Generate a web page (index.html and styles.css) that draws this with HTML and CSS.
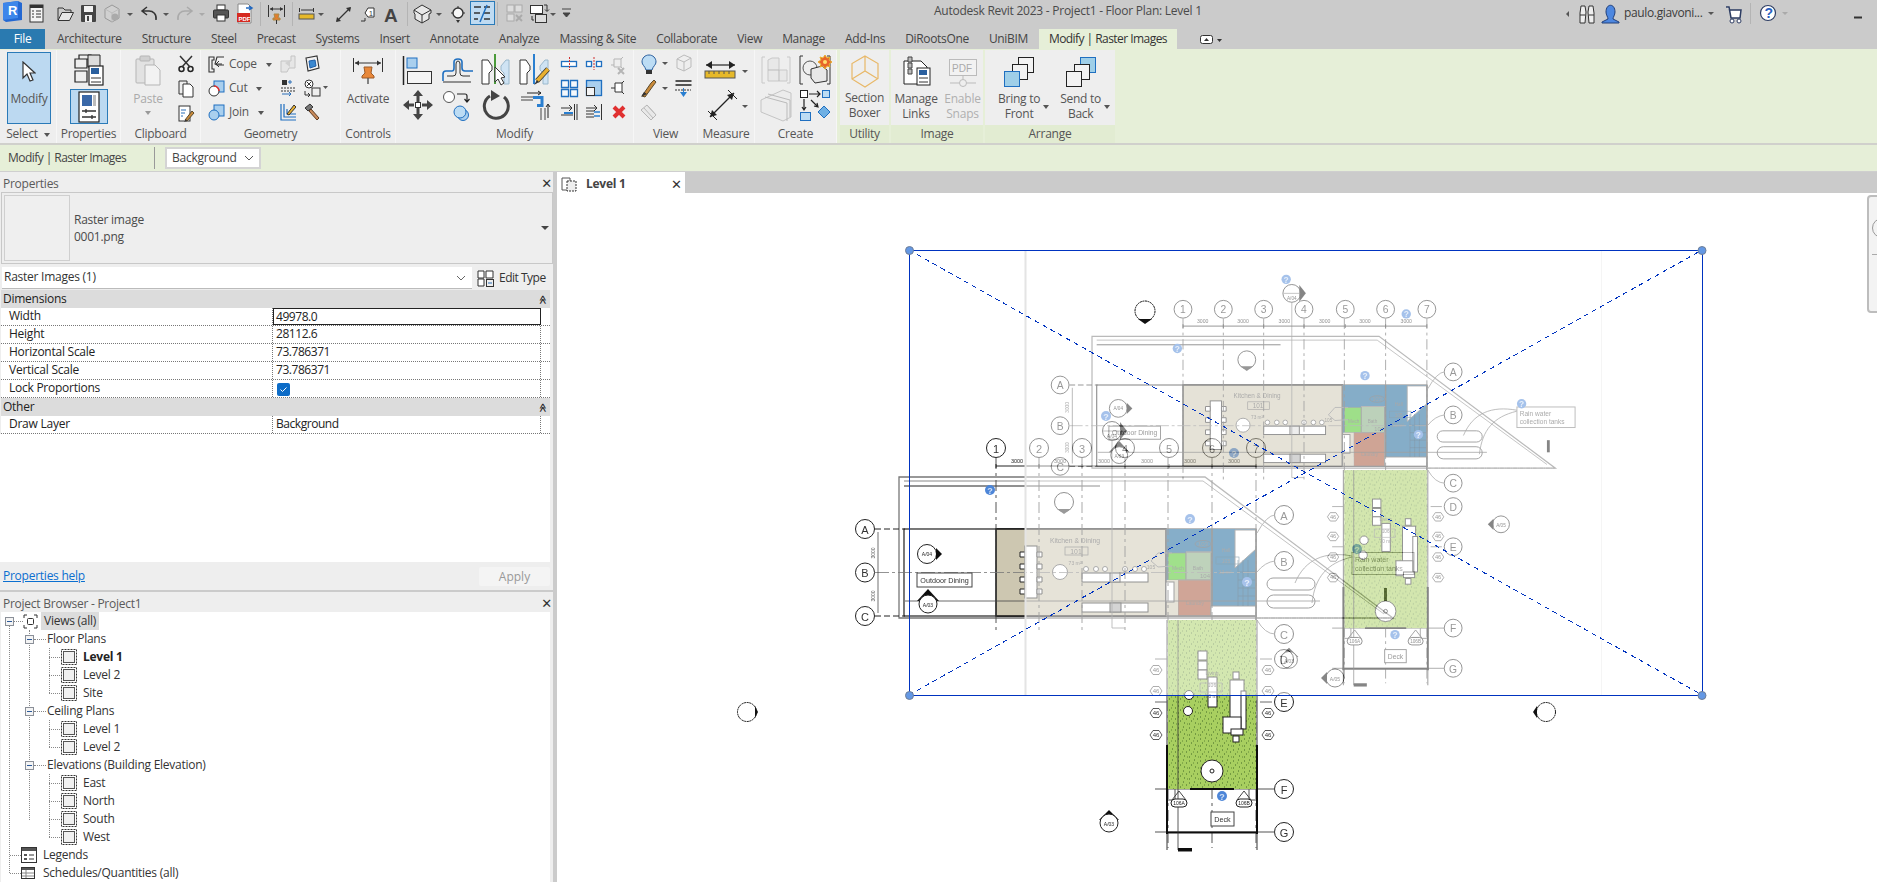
FILE: index.html
```html
<!DOCTYPE html>
<html lang="en">
<head>
<meta charset="utf-8">
<title>Autodesk Revit 2023 - Project1 - Floor Plan: Level 1</title>
<link rel="stylesheet" href="styles.css">
</head>
<body>
<svg class="defs" width="0" height="0" aria-hidden="true">
  <defs>
    <symbol id="viewico" viewBox="0 0 16 16">
      <rect x=".5" y=".5" width="15" height="15" fill="none" stroke="#333" stroke-dasharray="2 1"/>
      <rect x="2.5" y="2.5" width="11" height="11" fill="#f0f0f0" stroke="#555"/>
    </symbol>
    <symbol id="minus" viewBox="0 0 9 9">
      <rect x=".5" y=".5" width="8" height="8" fill="#f4f4f4" stroke="#8a8f98"/>
      <path d="M2 4.5h5" stroke="#2c5a9a"/>
    </symbol>
  </defs>
</svg>

<header class="titlebar">
  <svg class="qat" width="590" height="29" viewBox="0 0 590 29">
    <path d="M3 3 18 1l4 2v17l-16 2-3-2z" fill="#2468d2"/><path d="M3 3 18 1v17L3 20z" fill="#3d86ea"/>
    <text x="8" y="15" class="logo-r">R</text>
    <rect x="30" y="5" width="13" height="17" fill="#f4f4f4" stroke="#333"/><rect x="30" y="5" width="13" height="3" fill="#333"/><path d="M32 11h2M36 11h5M32 14h2M36 14h5M32 17h2M36 17h5" class="k"/>
    <path d="M58 20V8h5l2 2h6v3" class="k" /><path d="M58 20.500l4-8h11.500l-4 8z" fill="#e6e6e6" stroke="#333"/>
    <rect x="81" y="5" width="15" height="17" rx="1" fill="#444"/><rect x="84" y="6" width="9" height="6" fill="#f2f2f2"/><rect x="85" y="15" width="7" height="7" fill="#eee"/><rect x="87" y="16" width="2" height="5" fill="#444"/>
    <path d="m112 5 7 4v9l-7 4-7-4V9z" fill="#d0d0d0" stroke="#999"/><path d="m105 9 7 4 7-4M112 13v9" class="g"/><circle cx="115" cy="17" r="3.500" fill="#aaa"/>
    <path d="M127 13h6l-3 3z" class="car"/>
    <path d="M156 20c1-6-3-9-7-9h-7m5-4-5 4 5 4" fill="none" stroke="#333" stroke-width="1.500"/>
    <path d="M163 13h6l-3 3z" class="car"/>
    <path d="M178 20c-1-6 3-9 7-9h7m-5-4 5 4-5 4" fill="none" stroke="#aaa" stroke-width="1.500"/>
    <path d="M199 13h6l-3 3z" class="car-g"/>
    <rect x="217" y="5" width="8" height="5" fill="#fff" stroke="#333"/><rect x="213.500" y="10" width="15" height="8" rx="1" fill="#555" stroke="#333"/><rect x="217" y="15" width="8" height="6" fill="#fff" stroke="#333"/>
    <path d="M238 4h10l3 3v16h-13z" fill="#fff" stroke="#888"/><rect x="237" y="13" width="13" height="9" fill="#d62a20"/><text x="238.500" y="21" class="mini-pdf">PDF</text><path d="M246 8h5m-2-2 3 2-3 2" fill="none" stroke="#2268c0" stroke-width="1.500"/>
    <path d="M260.500 2v24M292.500 2v24M407.500 2v24M497.500 2v24" stroke="#b4b4b4"/>
    <path d="M268.500 5v12M284.500 5v12M270 9h13" class="k"/><path d="m270 9 3-2v4zM283 9l-3-2v4z" fill="#333"/><path d="M274 14h5l-1 4h2v2h-7v-2h2z" fill="#e47d2c" stroke="#a84"/><path d="M276.500 20v4" class="k"/>
    <rect x="299" y="14" width="15" height="5" fill="#e6b92a" stroke="#555"/><path d="M299.500 8v4M313.500 8v4M301 10h12" class="k"/><path d="M318 13h6l-3 3z" class="car"/>
    <path d="m337 21 13-13" stroke="#333" stroke-width="1.200"/><path d="m336 22 1-5 4 4zM351 7l-1 5-4-4z" fill="#333"/>
    <path d="M361 21h4v-3" class="k"/><path d="m365 13 3-5h6v9h-6z" fill="#fff" stroke="#333"/><text x="369" y="16" class="mini">1</text>
    <text x="384" y="22" class="big-a">A</text>
    <path d="m422 5 9 5v3l-2 1v5l-7 4-7-4v-5l-1-1v-3z" fill="#e8e8e8" stroke="#333"/><path d="m414 10 8 5 9-5M422 15v8" class="k"/>
    <path d="M436 13h6l-3 3z" class="car"/>
    <circle cx="458" cy="13" r="5" fill="#f6f6f6" stroke="#333" stroke-width="1.400"/><path d="M451 13h2M463 13h2M458 6v2" class="k"/><path d="m456 20 2 3 2-3z" fill="#333"/>
    <rect x="470.500" y="1.500" width="24" height="23" fill="#bfdbf2" stroke="#2a7ab8"/><path d="M474 7h7M474 13h6M474 19h4M484 7h6M484 13h6M484 19h6" stroke="#333" stroke-width="1.500"/><path d="m480 22 7-17" stroke="#1f6fc0" stroke-width="1.500"/>
    <rect x="507" y="5" width="7" height="7" fill="#ddd" stroke="#aaa"/><rect x="515" y="5" width="7" height="7" fill="#ddd" stroke="#aaa"/><rect x="507" y="14" width="7" height="7" fill="#ddd" stroke="#aaa"/><path d="m516 15 6 6m0-6-6 6" stroke="#aaa" stroke-width="1.800"/>
    <rect x="530.500" y="5.500" width="12" height="8" fill="#fff" stroke="#333"/><rect x="535.500" y="14.500" width="11" height="8" fill="#ddd" stroke="#333"/><path d="M544 5h3v6m-2-1.500 2 2 2-2M532 16v4h2" fill="none" stroke="#333"/>
    <path d="M550 13h6l-3 3z" class="car"/>
    <path d="M562 9h9M563 13h7l-3.500 4z" stroke="#444" fill="#444"/>
  </svg>
  <div class="doc-title">Autodesk Revit 2023 - Project1 - Floor Plan: Level 1</div>
  <svg class="infocenter" width="317" height="29" viewBox="1560 0 317 29">
    <path d="M1569 11v6l-3-3z" class="car"/>
    <path d="M1581 9h4v3h-4zM1589 9h4v3h-4z" fill="#fff" stroke="#333"/><path d="M1581 6h4l1 6 -1 11h-5v-10zM1589 6h4l1 7v10h-5l-1-11z" fill="#eee" stroke="#333"/><path d="M1580 15h5M1589 15h5" class="k"/>
    <path d="M1606 12c0-9 9-9 9 0 0 3-2 5-2 7l6 3v1h-17v-1l6-3c0-2-2-4-2-7z" fill="#4d87e0" stroke="#22407a"/>
    <text x="1624" y="17" class="who">paulo.giavoni...</text>
    <path d="M1708 12h6l-3 3z" class="car"/>
    <path d="M1726 7h3l2 11h9l1-8h-11" fill="#fff" stroke="#2d3d63" stroke-width="1.500"/><circle cx="1732" cy="21" r="2" fill="#fff" stroke="#2d3d63"/><circle cx="1739" cy="21" r="2" fill="#fff" stroke="#2d3d63"/>
    <path d="M1750.500 3v21" stroke="#b4b4b4"/>
    <circle cx="1768" cy="13" r="7.500" fill="#fff" stroke="#2d3d63" stroke-width="1.200"/><text x="1764.500" y="18" class="help">?</text>
    <path d="M1782 12h6l-3 3z" class="car-g"/>
    <path d="M1854 17.500h8" stroke="#333" stroke-width="2"/>
  </svg>
</header>

<nav class="tabs">
  <span class="tab file">File</span>
  <span class="tab first">Architecture</span><span class="tab">Structure</span><span class="tab">Steel</span><span class="tab">Precast</span><span class="tab">Systems</span><span class="tab">Insert</span><span class="tab">Annotate</span><span class="tab">Analyze</span><span class="tab">Massing &amp; Site</span><span class="tab">Collaborate</span><span class="tab">View</span><span class="tab">Manage</span><span class="tab">Add-Ins</span><span class="tab">DiRootsOne</span><span class="tab">UniBIM</span>
  <span class="tab context">Modify | Raster Images</span>
  <svg class="tab-toggle" width="26" height="20" viewBox="0 0 26 20">
    <rect x="1.500" y="6.500" width="12" height="8" rx="2" fill="#fff" stroke="#333"/><path d="M5 12h5L7.500 9z" fill="#333"/><path d="M18 10h5l-2.500 3z" fill="#333"/>
  </svg>
</nav>

<section class="ribbon">
  <div class="panel w-select">
    <div class="body">
      <button class="tool-on modify-btn">
        <svg width="14" height="22" viewBox="0 0 14 22"><path d="M1 1v16l4-4 3 7 3-1-3-7h5z" fill="#fff" stroke="#333" stroke-width="1.200"/></svg>
        <span>Modify</span>
      </button>
    </div>
    <div class="label">Select <i class="caret"></i></div>
  </div>

  <div class="panel w-props">
    <div class="body col">
      <svg class="props-top" width="30" height="32" viewBox="0 0 30 32">
        <path d="M1 5h12v9H1zM5 1h12v4H5zM1 17h12v11H1z" fill="#eee" stroke="#222" stroke-width="1.200"/><path d="M14 1h12v12H14z" fill="#ddd" stroke="#222"/>
        <rect x="15" y="12" width="14" height="19" fill="#fff" stroke="#222" stroke-width="1.200"/><rect x="17" y="14" width="8" height="6" fill="#2a5f9e"/><path d="M17 24h10M17 28h10" stroke="#333"/>
      </svg>
      <div class="tool-on props-on">
        <svg width="22" height="32" viewBox="0 0 22 32"><rect x="1" y="1" width="20" height="30" fill="#fff" stroke="#222" stroke-width="1.200"/><rect x="4" y="4" width="10" height="11" fill="#3a68a8"/><rect x="15" y="4" width="3" height="11" fill="#bbb"/><path d="M4 20h14M4 26h14M8 18v4M14 24v4" stroke="#333" stroke-width="1.300"/></svg>
      </div>
    </div>
    <div class="label">Properties</div>
  </div>

  <div class="panel w-clip">
    <div class="body row">
      <div class="big paste">
        <svg width="26" height="31" viewBox="0 0 26 31"><rect x="1" y="4" width="18" height="24" rx="1" fill="#e2e2e2" stroke="#b5b5b5"/><rect x="5" y="1" width="10" height="5" rx="1" fill="#d0d0d0" stroke="#b5b5b5"/><path d="M10 10h10l5 5v15H10z" fill="#f2f2f2" stroke="#b5b5b5"/></svg>
        <span class="dim">Paste</span>
        <i class="caret g"></i>
      </div>
      <div class="stack">
        <svg width="16" height="18" viewBox="0 0 16 18"><circle cx="3.500" cy="14" r="2.500" fill="none" stroke="#222" stroke-width="1.500"/><circle cx="12.500" cy="14" r="2.500" fill="none" stroke="#222" stroke-width="1.500"/><path d="M2 1l10 11M14 1 4 12" stroke="#333" stroke-width="1.500"/></svg>
        <svg width="16" height="18" viewBox="0 0 16 18"><path d="M1 1h8v13H1z" fill="#eee" stroke="#333"/><path d="M5 4h7l3 3v10H5z" fill="#fff" stroke="#333"/></svg>
        <svg width="17" height="18" viewBox="0 0 17 18"><rect x="1" y="1" width="11" height="15" fill="#fff" stroke="#333"/><path d="M3 5h5M3 8h4M3 11h2" stroke="#2a6fb8"/><path d="m7 15 7-9 2 2-7 8z" fill="#c98a3a" stroke="#5b4a2c"/><path d="m6 17 2-3 1 2z" fill="#333"/></svg>
      </div>
    </div>
    <div class="label">Clipboard</div>
  </div>

  <div class="panel w-geom">
    <div class="body geom">
      <svg width="17" height="17" viewBox="0 0 17 17"><path d="M1 1h5v3H4v9h2v3H1zM16 1H9l-2 7 2 1h7" fill="#f2f2f2" stroke="#333" stroke-width="1.100"/><path d="M8 8h6m-3-3-3 3 3 3" fill="none" stroke="#333"/></svg>
      <span class="gtext">Cope <i class="caret"></i></span>
      <svg width="16" height="18" viewBox="0 0 16 18"><path d="M1 6h10V1h4v12H9l-2 4H1z" fill="#e6e6e6" stroke="#c4c4c4"/><path d="m5 8 5-3v7z" fill="#d0d0d0"/></svg>
      <svg width="16" height="18" viewBox="0 0 16 18"><path d="m2 3 11-2 2 12-11 3z" fill="#f2f2f2" stroke="#333" stroke-width="1.100"/><path d="m5 6 6-1 1 6-6 2z" fill="#3a88d0" stroke="#1f5fa8"/></svg>

      <svg width="17" height="17" viewBox="0 0 17 17"><rect x="6" y="1" width="10" height="11" fill="#a9cfee" stroke="#1f6fc0"/><circle cx="6" cy="11" r="5" fill="#fff" stroke="#333"/><path d="M6 6a5 5 0 0 1 5 5" fill="none" stroke="#e03030" stroke-width="1.500"/></svg>
      <span class="gtext">Cut <i class="caret"></i></span>
      <svg width="16" height="18" viewBox="0 0 16 18"><path d="M1 9h14M1 12h14" stroke="#333" stroke-dasharray="2 1"/><rect x="2" y="1" width="5" height="5" fill="#333"/><path d="M8 3h4m-2-2v4M2 15h9m-2-2 2 2-2 2" fill="none" stroke="#2a6fb8"/></svg>
      <svg width="24" height="18" viewBox="0 0 24 18"><circle cx="5" cy="5" r="4" fill="#fff" stroke="#333"/><path d="m3 3 4 4m0-4-4 4" stroke="#333"/><rect x="8" y="9" width="8" height="8" fill="#eee" stroke="#333"/><path d="M1 12v4h5m-2-2 2 2-2 2" fill="none" stroke="#333"/><path d="M19 7h5l-2.500 3z" fill="#555"/></svg>

      <svg width="17" height="17" viewBox="0 0 17 17"><rect x="6" y="1" width="10" height="11" fill="#a9cfee" stroke="#1f6fc0"/><circle cx="6" cy="11" r="5" fill="#a9cfee" stroke="#1f6fc0"/></svg>
      <span class="gtext">Join <i class="caret"></i></span>
      <svg width="16" height="18" viewBox="0 0 16 18"><path d="M1 1v16h15M4 1v13h12M7 6v5h9" fill="none" stroke="#1f6fc0" stroke-width="1.200"/><path d="m7 11 7-9 2 2-7 8z" fill="#e8b030" stroke="#333"/></svg>
      <svg width="16" height="18" viewBox="0 0 16 18"><path d="m1 5 5-4 3 3-5 4z" fill="#777" stroke="#333"/><path d="m7 6 8 9-2 2-8-9z" fill="#c98a5a" stroke="#5b3a22"/></svg>
    </div>
    <div class="label">Geometry</div>
  </div>

  <div class="panel w-ctrl">
    <div class="body col">
      <svg class="ctrl-ico" width="32" height="28" viewBox="0 0 32 28"><path d="M1.500 1v14M30.500 1v14M3 6h26" stroke="#333"/><path d="m3 6 4-2.500v5zM29 6l-4-2.500v5z" fill="#333"/><path d="M12 10h8l-1 6 3 3v2H10v-2l3-3z" fill="#e8883a" stroke="#9c5a28"/><path d="M16 21v6" stroke="#555" stroke-width="1.400"/></svg>
      <span class="ctrl-text">Activate</span>
    </div>
    <div class="label">Controls</div>
  </div>

  <div class="panel w-mod">
    <div class="body">
      <svg width="238" height="75" viewBox="396 50 238 75">
        <path d="M403.500 56v29" stroke="#222" stroke-width="1.500"/><rect x="407" y="58" width="10" height="10" fill="#a9cfee" stroke="#1f6fc0"/><rect x="407.500" y="71.500" width="24" height="12" fill="#f5f5f5" stroke="#333"/>
        <path d="M443 81v-7q0-3 3-3h6q2 0 2-3v-6q0-3 4-3t4 3v6q0 3 3 3h8" class="bl"/><path d="M443 82h28M447 76h6q3 0 3-3v-9q0-3 2-3t2 3v9q0 3 3 3h7" fill="none" stroke="#333"/>
        <path d="M482 60h6l4 6v4l-3 3v11h-7z" fill="#fff" stroke="#333"/><path d="M495 54v30" stroke="#4a9a3a" stroke-width="2"/><path d="M509 60h-3l-5 6v4l3 3v11h5z" fill="#cfe3f3" stroke="#9ab8cc"/><path d="M495 67v15l3-3 3 6 3-2-3-5 4-1z" fill="#fff" stroke="#333"/>
        <path d="M520 60h6l4 6v4l-3 3v11h-7z" fill="#fff" stroke="#333"/><path d="M534 54v30" stroke="#2a7fd0" stroke-width="2"/><path d="M548 60h-3l-5 6v4l3 3v11h5z" fill="#cfe3f3" stroke="#9ab8cc"/><path d="m537 81 11-12" stroke="#333" stroke-width="5"/><path d="m537 81 11-12" stroke="#e8b030" stroke-width="3.500"/><path d="m534 85 3-5 2 2z" fill="#333"/>
        <rect x="561.500" y="61.500" width="15" height="5" fill="#fff" class="blue-s"/><path d="M569.500 57v13" stroke="#d03030" stroke-dasharray="2 1"/>
        <rect x="586.500" y="61.500" width="5" height="5" fill="#fff" class="blue-s"/><rect x="596.500" y="61.500" width="5" height="5" fill="#fff" class="blue-s"/><path d="M594 57v13" stroke="#d03030" stroke-dasharray="2 1"/>
        <path d="M611 65h3m0-6h7v8h-7zM621 59l2-2M621 67l2 2" fill="none" stroke="#b5b5b5"/><path d="m618 68 6 6m0-6-6 6" stroke="#b5b5b5" stroke-width="2"/>
        <path d="M561.500 80.500h7v7h-7zM570.500 80.500h7v7h-7zM561.500 89.500h7v7h-7zM570.500 89.500h7v7h-7z" fill="#f4f8fc" class="blue-s"/>
        <rect x="586.500" y="80.500" width="15" height="15" fill="#a9cfee" class="blue-s"/><rect x="586.500" y="87.500" width="8" height="8" fill="#f4f4f4" stroke="#333"/>
        <path d="M611 88h4m0-5h7v9h-7zM622 83l2-2M622 92l2 2" fill="#fff" stroke="#333"/>
        <path d="M561 108h11m-3-3 3 3-3 3M561 115h12M574.500 104v16M577 104v16" fill="none" stroke="#333"/><path d="M564 112h9v2h-9z" fill="#2a7fd0"/>
        <path d="M586 108h11m-3-3 3 3-3 3M586 111h8M586 114h8M586 117h8M601.500 104v16" fill="none" stroke="#333"/><path d="M594 112h6M594 116h6" stroke="#2a7fd0" stroke-width="1.500"/>
        <path d="m614 107 10 10m0-10-10 10" stroke="#e03030" stroke-width="4"/>
        <path d="M418 90l5 6h-3.500v6h-3v-6H413zM418 120l5-6h-3.500v-6h-3v6H413zM403 105l6-5v3.500h5v3h-5v3.500zM433 105l-6-5v3.500h-5v3h5v3.500z" fill="#444"/><rect x="415.500" y="102.500" width="5" height="5" fill="#fff" stroke="#333"/>
        <circle cx="449" cy="97" r="5.500" fill="#fff" stroke="#555"/><path d="M457 94h8q2 0 2 2v5m-2.500-2 2.500 3 2.500-3" fill="none" stroke="#222" stroke-width="1.200"/><circle cx="463" cy="115" r="5.500" fill="#a9cfee" stroke="#1f6fc0"/><circle cx="460" cy="112" r="6" fill="#bcdcf4" stroke="#1f6fc0"/>
        <path d="M490 96a12 12 0 1 0 14 1" fill="none" stroke="#444" stroke-width="3"/><path d="m491 90 9 6-9 5z" fill="#444"/>
        <path d="M521 97h12M521 100h12" stroke="#444"/><path d="M527 93h14m-3-2 3 2-3 2M548 118v-13m-2 2 2-3 2 3" fill="none" stroke="#222"/><path d="M533 97.500h9v8h-5" fill="none" stroke="#2a7fd0" stroke-width="3"/><path d="M541 108v12M545 108v12" stroke="#444"/>
      </svg>
    </div>
    <div class="label">Modify</div>
  </div>

  <div class="panel w-view">
    <div class="body">
      <svg width="64" height="75" viewBox="634 50 64 75">
        <path d="M649 55c-4 0-7 3-7 7 0 3 3 4 4 8h6c1-4 4-5 4-8 0-4-3-7-7-7z" fill="#bcdcf4" stroke="#2a5f9e"/><rect x="646" y="70" width="6" height="4" fill="#333"/>
        <path d="M662 62h6l-3 3z" class="car"/>
        <path d="m684 55 7 3v9l-7 4-7-3v-9z" fill="#eee" stroke="#bbb"/><path d="m677 59 7 3 7-4M684 62v9" class="g"/>
        <path d="m642 96 9-13 3-3 2 2-3 4-8 11z" fill="#c98a3a" stroke="#5b4a2c"/><path d="M641 97l3-5 3 2z" fill="#333"/>
        <path d="M662 87h6l-3 3z" class="car"/>
        <path d="M675.500 81h16M675.500 85h16" stroke="#222" stroke-width="1.500"/><path d="M675 90h16" stroke="#333" stroke-dasharray="2 1"/><path d="M683 88v4h-3l3.500 5 3.500-5h-3v-4z" fill="#2a7fd0"/>
        <path d="m641 110 6-5 9 10-5 5z" fill="#e8e8e8" stroke="#b5b5b5"/><path d="m644 108 9 10M647 105l9 10" class="g"/>
      </svg>
    </div>
    <div class="label">View</div>
  </div>

  <div class="panel w-meas">
    <div class="body">
      <svg width="57" height="75" viewBox="698 50 57 75">
        <path d="M706 65h29" stroke="#222" stroke-width="1.200"/><path d="m706 65 6-4v8zM735 65l-6-4v8z" fill="#222"/><rect x="705" y="71" width="30" height="7" fill="#e6b92a" stroke="#555"/><path d="M709 71v3M714 71v3M719 71v3M724 71v3M729 71v3" stroke="#555"/>
        <path d="M742 70h6l-3 3z" class="car"/>
        <path d="m710 117 24-24" stroke="#222" stroke-width="1.200"/><path d="m708 111 9 9M728 90l9 9" stroke="#222"/><path d="m710 117 2-7 5 5zM734 93l-2 7-5-5z" fill="#222"/>
        <path d="M742 105h6l-3 3z" class="car"/>
      </svg>
    </div>
    <div class="label">Measure</div>
  </div>

  <div class="panel w-create">
    <div class="body">
      <svg width="82" height="75" viewBox="755 50 82 75">
        <path d="M765 57h-3v26h3M787 57h3v26h-3" fill="none" stroke="#c8c8c8"/><path d="M768 72V60l4-2h7v12h8v11h-19z" fill="#e8e8e8" stroke="#c8c8c8"/><path d="M768 70h11v11" class="g"/>
        <path d="M803 56h-3v28h3M827 56h3v28h-3" fill="none" stroke="#333"/><circle cx="810" cy="68" r="7" fill="#eee" stroke="#555"/><path d="m811 69 11-3 5 4v11l-12 2-4-5z" fill="#e8e8e8" stroke="#333"/>
        <path d="m825 55 2 3 3-1-1 3 3 2-3 2 1 3-3-1-2 3-2-3-3 1 1-3-3-2 3-2-1-3 3 1z" fill="#e8652a" stroke="#e8b030"/><circle cx="825" cy="62" r="2" fill="#ffe070"/>
        <path d="m761 100 22-10 8 3v24l-8 4-22-9z" fill="#ececec" stroke="#c4c4c4"/><path d="m768 94 22 6v17M765 97l22 6v18" class="g"/>
        <rect x="800.500" y="90.500" width="7" height="7" fill="#fff" stroke="#222"/><rect x="822.500" y="90.500" width="7" height="7" fill="#bcdcf4" stroke="#1f6fc0"/><path d="M809 94h11m-3-3 3 3-3 3M804 99v11m-2-3 2 3 2-3M811 100l7 7m-1-4 1 4-4-1" fill="none" stroke="#222" stroke-width="1.200"/>
        <rect x="800.500" y="112.500" width="10" height="8" fill="#bcdcf4" stroke="#1f6fc0"/><path d="m824 106 6 6-6 6-6-6z" fill="#6fb0e4" stroke="#1f6fc0"/>
      </svg>
    </div>
    <div class="label">Create</div>
  </div>

  <div class="panel context w-util">
    <div class="body col">
      <svg class="box-ico" width="28" height="33" viewBox="0 0 28 33"><path d="m14 1 13 7.500v15L14 32 1 24V8.500zM1 24l13-8 13 8M14 16V1" fill="none" stroke="#e8b868" stroke-width="1.200"/></svg>
      <span class="cmd">Section<br>Boxer</span>
    </div>
    <div class="label">Utility</div>
  </div>

  <div class="panel context w-image">
    <div class="body row image-row">
      <div class="big">
        <svg width="31" height="31" viewBox="0 0 31 31"><path d="M3 6h17l6 6v17H3z" fill="#fff" stroke="#222"/><rect x="16" y="13" width="13" height="17" fill="#fff" stroke="#222"/><rect x="18" y="15" width="8" height="5" fill="#2a5f9e"/><path d="M18 23h9M18 27h9" stroke="#333"/><path d="M7 2h4v5H7zM7 8h4v5H7zM7 14h4v5H7z" fill="#bbb" stroke="#444"/></svg>
        <span class="cmd">Manage<br>Links</span>
      </div>
      <div class="big">
        <svg class="pdf-ico" width="28" height="28" viewBox="0 0 28 28"><rect x=".5" y=".5" width="27" height="16" fill="#f2f2f2" stroke="#bbb"/><text x="3" y="13" class="pdf-t">PDF</text><path d="M1 24h9M18 24h9M14 17v3" stroke="#bbb"/><circle cx="14" cy="24" r="3.500" fill="none" stroke="#bbb"/></svg>
        <span class="cmd dim">Enable<br>Snaps</span>
      </div>
    </div>
    <div class="label">Image</div>
  </div>

  <div class="panel context w-arr">
    <div class="body row arrange-row">
      <div class="big">
        <svg width="30" height="31" viewBox="0 0 30 31"><rect x="14.500" y="1.500" width="15" height="15" fill="#f2f2f2" stroke="#222"/><rect x="8.500" y="8.500" width="15" height="15" fill="#f2f2f2" stroke="#222"/><rect x=".5" y="15.500" width="15" height="15" fill="#9fcfe8" stroke="#1f6fc0"/></svg>
        <span class="cmd">Bring to<br>Front</span>
      </div>
      <i class="caret side"></i>
      <div class="big">
        <svg width="30" height="31" viewBox="0 0 30 31"><rect x="14.500" y="1.500" width="15" height="15" fill="#9fcfe8" stroke="#1f6fc0"/><rect x="8.500" y="8.500" width="15" height="15" fill="#f2f2f2" stroke="#222"/><rect x=".5" y="15.500" width="15" height="15" fill="#f2f2f2" stroke="#222"/></svg>
        <span class="cmd">Send to<br>Back</span>
      </div>
      <i class="caret side"></i>
    </div>
    <div class="label">Arrange</div>
  </div>
</section>

<section class="options">
  <span class="opt-title">Modify | Raster Images</span>
  <span class="opt-sep"></span>
  <div class="opt-select">Background<svg width="10" height="6" viewBox="0 0 10 6"><path d="m1 1 4 4 4-4" fill="none" stroke="#555"/></svg></div>
</section>

<div class="work">
  <aside class="side-pane">
    <div class="pane-title">Properties<span class="x">✕</span></div>
    <div class="type-box">
      <div class="thumb"></div>
      <div class="type-text">Raster image<br>0001.png</div>
      <i class="caret dark"></i>
    </div>
    <div class="type-row">
      <div class="type-select">Raster Images (1)<svg width="10" height="6" viewBox="0 0 10 6"><path d="m1 1 4 4 4-4" fill="none" stroke="#666"/></svg></div>
      <svg width="17" height="17" viewBox="0 0 17 17"><path d="M1 1h6v7H1zM1 9h6v7H1zM9 1h7v7H9z" fill="#fff" stroke="#333"/><rect x="9.500" y="9.500" width="7" height="7" fill="#eee" stroke="#333"/><path d="M11 13h4" stroke="#2a6fb8"/></svg>
      <span class="edit-type">Edit Type</span>
    </div>
    <div class="group-head">Dimensions<span class="chev">≪</span></div>
    <div class="prow"><span>Width</span><span class="val editing">49978.0</span><span></span></div>
    <div class="prow"><span>Height</span><span class="val">28112.6</span><span></span></div>
    <div class="prow"><span>Horizontal Scale</span><span class="val">73.786371</span><span></span></div>
    <div class="prow"><span>Vertical Scale</span><span class="val">73.786371</span><span></span></div>
    <div class="prow"><span>Lock Proportions</span><span class="val"><i class="check"><svg width="13" height="13" viewBox="0 0 13 13"><path d="m3.500 6.500 2 2 4-4" fill="none" stroke="#fff"/></svg></i></span><span></span></div>
    <div class="group-head">Other<span class="chev">≪</span></div>
    <div class="prow"><span>Draw Layer</span><span class="val">Background</span><span></span></div>
    <div class="prop-blank"></div>
    <div class="prop-foot"><a class="help-link">Properties help</a><span class="apply">Apply</span></div>

    <div class="pane-title browser-title">Project Browser - Project1<span class="x">✕</span></div>
    <div class="tree">
      <div class="node root"><svg class="exp" width="9" height="9"><use href="#minus"/></svg><i class="dots d1"></i>
        <svg width="15" height="15" viewBox="0 0 15 15"><path d="M1 4V1h3M11 1h3v3M14 11v3h-3M4 14H1v-3" fill="none" stroke="#333"/><rect x="4.500" y="4.500" width="6" height="6" rx="1" fill="#fff" stroke="#333"/></svg>
        <span class="sel">Views (all)</span></div>
      <div class="groups">
        <div class="node group"><svg class="exp" width="9" height="9"><use href="#minus"/></svg><i class="dots d2"></i><span>Floor Plans</span></div>
        <div class="leaves">
          <div class="node leaf"><i class="dots d3"></i><svg width="16" height="16"><use href="#viewico"/></svg><b>Level 1</b></div>
          <div class="node leaf"><i class="dots d3"></i><svg width="16" height="16"><use href="#viewico"/></svg><span>Level 2</span></div>
          <div class="node leaf"><i class="dots d3"></i><svg width="16" height="16"><use href="#viewico"/></svg><span>Site</span></div>
        </div>
        <div class="node group"><svg class="exp" width="9" height="9"><use href="#minus"/></svg><i class="dots d2"></i><span>Ceiling Plans</span></div>
        <div class="leaves">
          <div class="node leaf"><i class="dots d3"></i><svg width="16" height="16"><use href="#viewico"/></svg><span>Level 1</span></div>
          <div class="node leaf"><i class="dots d3"></i><svg width="16" height="16"><use href="#viewico"/></svg><span>Level 2</span></div>
        </div>
        <div class="node group"><svg class="exp" width="9" height="9"><use href="#minus"/></svg><i class="dots d2"></i><span>Elevations (Building Elevation)</span></div>
        <div class="leaves">
          <div class="node leaf"><i class="dots d3"></i><svg width="16" height="16"><use href="#viewico"/></svg><span>East</span></div>
          <div class="node leaf"><i class="dots d3"></i><svg width="16" height="16"><use href="#viewico"/></svg><span>North</span></div>
          <div class="node leaf"><i class="dots d3"></i><svg width="16" height="16"><use href="#viewico"/></svg><span>South</span></div>
          <div class="node leaf"><i class="dots d3"></i><svg width="16" height="16"><use href="#viewico"/></svg><span>West</span></div>
        </div>
      </div>
      <div class="node top"><i class="dots d4"></i><svg width="16" height="16" viewBox="0 0 16 16"><rect x=".5" y=".5" width="15" height="15" fill="#fff" stroke="#333"/><rect x="1" y="1" width="14" height="3" fill="#555"/><path d="M3 7h3v2H3zM3 11h3v2H3z" fill="#555"/><path d="M8 8h5M8 12h5" stroke="#333"/></svg><span>Legends</span></div>
      <div class="node top"><i class="dots d4"></i><svg width="16" height="16" viewBox="0 0 16 16"><rect x=".5" y="2.500" width="13" height="11" fill="#fff" stroke="#333"/><rect x="1" y="3" width="12" height="2" fill="#555"/><path d="M1 8h12M1 11h12M5 5v8" stroke="#888"/></svg><span>Schedules/Quantities (all)</span></div>
    </div>
  </aside>

  <main class="view-area">
    <div class="view-tabs">
      <div class="view-tab">
        <svg width="16" height="15" viewBox="0 0 16 15"><path d="M1 1h8v12H1z" fill="#fff" stroke="#555"/><path d="M6 4h9v10H6z" fill="#eee" stroke="#333" stroke-dasharray="2 1"/></svg>
        <b>Level 1</b><span class="x">✕</span>
      </div>
    </div>
    <div class="canvas">
      <svg class="drawing" width="1320" height="689" viewBox="557 193 1320 689">
        <defs>
          <filter id="soft" x="-5%" y="-5%" width="110%" height="110%"><feGaussianBlur stdDeviation=".5"/></filter>
          <pattern id="stipple" width="11" height="11" patternUnits="userSpaceOnUse">
            <rect width="11" height="11" fill="#a8cf60"/>
            <path d="M1 2h1M6 1h1M9 4h1M3 6h1M7 8h1M1 9h1M5 4h.7M10 9h.7" stroke="#335a1c" stroke-width=".9"/>
          </pattern>
          <clipPath id="imgclip"><rect x="1025" y="251" width="576" height="444"/></clipPath>
          <g id="plan">
            <!-- shell -->
            <path d="M899 477H1205L1393 618H899z" fill="none" stroke="#777" stroke-width="1.300"/>
            <path d="M904 481H1203L1384 614" fill="none" stroke="#888" stroke-width="1"/>
            <path d="M904 486H1100" stroke="#222" stroke-width="1"/>
            <path d="M1257 618H1393" stroke="#777" stroke-dasharray="4 1 1 1"/>
            <rect x="904" y="529" width="352" height="87" fill="#fff" stroke="#222" stroke-width="1.200"/>
            <rect x="996" y="529" width="170" height="87" fill="#cdc7b1" stroke="#111" stroke-width="1.500"/>
            <rect x="1166" y="529" width="90" height="77" fill="#0d5d93"/>
            <path d="M1235 530h21v19l-21 19z" fill="#fff" stroke="#666"/>
            <rect x="1168" y="553" width="18" height="27" fill="#41c119" stroke="#555" stroke-width=".6"/>
            <rect x="1186" y="552" width="25" height="28" fill="#7ba577" stroke="#555"/>
            <rect x="1178" y="580" width="33" height="36" fill="#a14b2d" stroke="#666"/>
            <rect x="1166" y="580" width="12" height="36" fill="#cdc7b1"/>
            <rect x="1211" y="606" width="45" height="10" fill="#fff" stroke="#555"/>
            <path d="M1238 560v46M1243 560v46M1248 560v46M1238 572h18M1238 580h18M1238 588h18M1238 596h18" stroke="#063556" stroke-width=".6"/>
            <path d="M1166 529V616M1256 529V620M1212 529v77M1167 616h90" stroke="#444" stroke-width="1.500"/>
            <path d="M1186 552h26M1172 553l-14 0 -7 8 7 6 14-1" fill="none" stroke="#777"/>
            <rect x="1216" y="557" width="23" height="7" fill="none" stroke="#1c4a6a" stroke-width=".6"/>
            <ellipse cx="1203" cy="544" rx="8" ry="3.500" fill="none" stroke="#444" stroke-width=".7"/>
            <text x="1203" y="546" class="pl s">103</text>
            <text x="1226" y="552" class="pl">Hall</text><text x="1226" y="563" class="pl">105</text><text x="1225" y="574" class="pl">23 m²</text>
            <text x="1178" y="570" class="pl">Mech</text><text x="1198" y="570" class="pl">Bath</text><text x="1205" y="578" class="pl s">104</text>
            <text x="1195" y="605" class="pl">Laundry</text>
            <text x="1151" y="569" class="pl">105</text>
            <!-- kitchen furniture -->
            <rect x="1025" y="546" width="12" height="52" fill="#fff" stroke="#222"/>
            <path d="M1020 552h5v5h-5zM1020 564h5v5h-5zM1020 577h5v5h-5zM1020 589h5v5h-5zM1037 552h5v5h-5zM1037 564h5v5h-5zM1037 577h5v5h-5zM1037 589h5v5h-5z" fill="#fff" stroke="#222"/>
            <circle cx="1060" cy="572" r="7.500" fill="#fff" stroke="#555"/>
            <circle cx="1086" cy="569" r="2.500" fill="#fff" stroke="#555"/><circle cx="1096" cy="569" r="2.500" fill="#fff" stroke="#555"/><circle cx="1105" cy="569" r="2.500" fill="#fff" stroke="#555"/><circle cx="1125" cy="569" r="2.500" fill="#fff" stroke="#555"/><circle cx="1135" cy="569" r="2.500" fill="#fff" stroke="#555"/><circle cx="1144" cy="569" r="2.500" fill="#fff" stroke="#555"/>
            <rect x="1082" y="573" width="66" height="9" fill="#fff" stroke="#222"/><rect x="1110" y="573" width="10" height="9" fill="#ddd" stroke="#222"/>
            <rect x="1082" y="603" width="66" height="9" fill="#fff" stroke="#222"/><rect x="1110" y="603" width="11" height="9" fill="#aaa" stroke="#222"/>
            <text x="1075" y="543" class="pl m">Kitchen &amp; Dining</text>
            <rect x="1065" y="547" width="23" height="8" fill="none" stroke="#555" stroke-width=".7"/><text x="1076" y="554" class="pl m">101</text>
            <text x="1075" y="565" class="pl">73 m²</text>
            <rect x="1166" y="582" width="8" height="20" fill="#fff" stroke="#444"/>
            <rect x="1179" y="621" width="23" height="6" fill="#fff" stroke="#222"/>
            <!-- grid numbers -->
            <path d="M996 458V633M1039 458V633M1082 458V633M1125 458V633M1168 458V848M1212 458V848M1256 458V848" stroke="#444" stroke-width=".9" stroke-dasharray="11 4 3 4"/>
            <path d="M1112 440V628H1125" fill="none" stroke="#666" stroke-width=".8"/>
            <path d="M996 466H1256" stroke="#222"/>
            <path d="M996 464v4M1039 464v4M1082 464v4M1125 464v4M1169 464v4M1212 464v4M1256 464v4" stroke="#222"/>
            <g class="dimt"><text x="1017" y="463">3000</text><text x="1060" y="463">3000</text><text x="1104" y="463">3000</text><text x="1147" y="463">3000</text><text x="1190" y="463">3000</text><text x="1234" y="463">3000</text></g>
            <g class="bub">
              <circle cx="996" cy="448" r="9.500"/><circle cx="1039" cy="448" r="9.500"/><circle cx="1082" cy="448" r="9.500"/><circle cx="1125" cy="448" r="9.500"/><circle cx="1169" cy="448" r="9.500"/><circle cx="1212" cy="448" r="9.500"/><circle cx="1256" cy="448" r="9.500"/>
              <circle cx="865" cy="529" r="9.500"/><circle cx="865" cy="572.500" r="9.500"/><circle cx="865" cy="616" r="9.500"/>
              <circle cx="1284" cy="515" r="9.500"/><circle cx="1284" cy="561" r="9.500"/><circle cx="1284" cy="634" r="9.500"/><circle cx="1284" cy="659" r="9.500"/><circle cx="1284" cy="702" r="9.500"/><circle cx="1284" cy="789" r="9.500"/><circle cx="1284" cy="832" r="9.500"/>
            </g>
            <g class="bubt">
              <text x="996" y="452.500">1</text><text x="1039" y="452.500">2</text><text x="1082" y="452.500">3</text><text x="1125" y="452.500">4</text><text x="1169" y="452.500">5</text><text x="1212" y="452.500">6</text><text x="1256" y="452.500">7</text>
              <text x="865" y="533.500">A</text><text x="865" y="577">B</text><text x="865" y="620.500">C</text>
              <text x="1284" y="519.500">A</text><text x="1284" y="565.500">B</text><text x="1284" y="638.500">C</text><text x="1284" y="663.500">D</text><text x="1284" y="706.500">E</text><text x="1284" y="793.500">F</text><text x="1284" y="836.500">G</text>
            </g>
            <path d="M875 529h30" stroke="#222" stroke-dasharray="6 3"/><path d="M875 616h30" stroke="#222" stroke-dasharray="6 3"/><path d="M875 572.500h380" stroke="#777" stroke-dasharray="14 3 3 3" stroke-width=".8"/>
            <path d="M878 532V613" stroke="#333" stroke-width=".7"/>
            <text x="875" y="553" class="pl v" transform="rotate(-90 875 553)">3000</text><text x="875" y="596" class="pl v" transform="rotate(-90 875 596)">3000</text>
            <path d="M1257 533q10-18 18-18M1257 572q8-10 18-11M1257 620q8 14 18 14" fill="none" stroke="#777"/>
            <path d="M905 601H1320" stroke="#444" stroke-width=".8"/>
            <path d="M1155 659h120M1155 702h120" stroke="#444" stroke-dasharray="12 3 3 3" stroke-width=".8"/>
            <path d="M1155 789h120M1155 832h120" stroke="#555"/>
            <!-- outdoor dining -->
            <rect x="917" y="573" width="55" height="14" fill="#fff" stroke="#444"/><text x="944.500" y="583" class="pl b">Outdoor Dining</text>
            <g class="mark"><circle cx="927" cy="554" r="9.500"/><path d="m936 548 6 6-6 6z" fill="#111"/><text x="927" y="556" class="pl t">A/04</text></g>
            <g class="mark"><path d="m917 601 11-12 11 12z" fill="#111"/><circle cx="928" cy="604" r="9"/><text x="928" y="607" class="pl t">A/03</text></g>
            <g class="mark"><circle cx="1112" cy="431" r="9.500"/><path d="m1120 422 7 9-7 9z" fill="#111"/><path d="M1103 431h18" stroke="#555" stroke-width=".7"/><text x="1112" y="438" class="pl t">A/04</text></g>
            <g class="mark"><path d="m1099 820 10-10 10 10z" fill="#111"/><circle cx="1109" cy="823" r="9"/><text x="1109" y="826" class="pl t">A/03</text></g>
            <g class="mark"><circle cx="1335" cy="678" r="9"/><path d="m1327 672-6 6 6 6z" fill="#111"/><text x="1335" y="681" class="pl t">A/05</text></g>
            <g class="mark"><circle cx="1064" cy="502" r="9.500"/><path d="m1057 509 7 5 7-5z" fill="#333"/></g>
            <!-- living -->
            <rect x="1168" y="620" width="88" height="169" fill="url(#stipple)"/>
            <path d="M1167 620V850M1257 620V850" stroke="#555" stroke-width="1.200"/>
            <path d="M1167 745V834M1257 745V834" stroke="#111" stroke-width="2"/>
            <path d="M1166 832.500H1258" stroke="#111" stroke-width="2"/><path d="M1190 789h44" stroke="#111" stroke-width="2"/>
            <path d="M1168 800h7v-11M1256 800h-7v-11" fill="none" stroke="#555"/>
            <path d="M1178 620V850" stroke="#333" stroke-width=".8"/><rect x="1178" y="848" width="14" height="3.500" fill="#111"/>
            <g class="furn">
              <rect x="1198" y="651" width="9" height="9"/><rect x="1198" y="661" width="9" height="9"/><rect x="1198" y="670" width="9" height="9"/><rect x="1208" y="677" width="9" height="30"/>
              <rect x="1230" y="680" width="14" height="38"/><rect x="1241" y="691" width="5" height="38"/><rect x="1223" y="717" width="18" height="16"/><rect x="1231" y="729" width="12" height="6"/><rect x="1233" y="672" width="6" height="7"/><rect x="1233" y="736" width="6" height="6"/>
              <circle cx="1189" cy="695" r="4.500"/><circle cx="1188" cy="711" r="4.500"/>
              <circle cx="1212" cy="771" r="11"/>
            </g>
            <circle cx="1212" cy="771" r="2" fill="none" stroke="#222"/><path d="M1200 683h22v9h-22z" fill="none" stroke="#777" stroke-width=".7"/>
            <text x="1212" y="675" class="pl">Living</text><text x="1212" y="687" class="pl">106</text><text x="1212" y="698" class="pl">70 m²</text>
            <path d="m1172 800 7-9 7 9M1237 800l7-9 7 9" fill="none" stroke="#444"/>
            <g class="furn"><rect x="1171" y="799" width="16" height="8" rx="4"/><rect x="1236" y="799" width="16" height="8" rx="4"/></g>
            <text x="1179" y="805" class="pl t">106A</text><text x="1244" y="805" class="pl t">106B</text>
            <rect x="1211" y="812" width="23" height="14" fill="#fff" stroke="#444"/><text x="1222.500" y="822" class="pl b">Deck</text>
            <g class="tags">
              <path d="m1150 670 3-4.500h6l3 4.500-3 4.500h-6zM1150 691l3-4.500h6l3 4.500-3 4.500h-6zM1150 713l3-4.500h6l3 4.500-3 4.500h-6zM1150 735l3-4.500h6l3 4.500-3 4.500h-6zM1262 670l3-4.500h6l3 4.500-3 4.500h-6zM1262 691l3-4.500h6l3 4.500-3 4.500h-6zM1262 713l3-4.500h6l3 4.500-3 4.500h-6zM1262 735l3-4.500h6l3 4.500-3 4.500h-6z"/>
            </g>
            <g class="tagt"><text x="1156" y="672">46</text><text x="1156" y="693">46</text><text x="1156" y="715">46</text><text x="1156" y="737">46</text><text x="1268" y="672">46</text><text x="1268" y="693">46</text><text x="1268" y="715">46</text><text x="1268" y="737">46</text></g>
            <!-- tanks -->
            <rect x="1267" y="578" width="48" height="12" rx="6" fill="none" stroke="#444"/><rect x="1267" y="595" width="48" height="13" rx="6.500" fill="none" stroke="#444"/>
            <path d="M1295 583c10-24 30-32 57-27M1312 603c3-26 15-40 40-46" fill="none" stroke="#555" stroke-width=".8"/>
            <rect x="1352" y="552.500" width="62" height="22" fill="#fff" stroke="#777"/>
            <text x="1355" y="562" class="pl l">Rain water</text><text x="1355" y="571" class="pl l">collection tanks</text>
            <rect x="1384" y="588" width="3" height="13" fill="#111"/>
            <!-- review dots -->
            <g class="q"><circle cx="990" cy="490" r="5"/><circle cx="1190" cy="519" r="5"/><circle cx="1222" cy="796" r="5"/><circle cx="1247" cy="582" r="5"/><circle cx="1234" cy="453" r="5"/><circle cx="1106" cy="416" r="5"/><circle cx="1357" cy="549" r="5"/></g>
            <g class="qt"><text x="990" y="493.500">?</text><text x="1190" y="522.500">?</text><text x="1222" y="799.500">?</text><text x="1247" y="585.500">?</text><text x="1234" y="456.500">?</text><text x="1106" y="419.500">?</text><text x="1357" y="552.500">?</text></g>
          </g>
        </defs>

        <g filter="url(#soft)"><use href="#plan"/></g>

        <g clip-path="url(#imgclip)">
          <g opacity=".5" filter="url(#soft)">
            <rect x="1025" y="251" width="576" height="444" fill="#fff"/>
            <use href="#plan" transform="translate(1183 385) scale(.938 .935) translate(-996 -529)"/>
          </g>
        </g>
        <path d="M1025.500 251V695" stroke="#e4e4e4" stroke-width="2"/>
        <path d="M1601.500 251V695" stroke="#f5f5f5"/>

        <g class="elev">
          <circle cx="1145" cy="311" r="10"/><path d="m1138 319 7 5 7-5z" fill="#111" stroke="none"/>
          <circle cx="747" cy="712" r="9.500"/><path d="m755 706 3 6-3 6z" fill="#111" stroke="none"/>
          <circle cx="1546" cy="712" r="9.500"/><path d="m1537 706-4 6 4 6z" fill="#111" stroke="none"/>
        </g>

        <path class="crisp" d="M909 250 1702 695M909 695 1702 250" stroke="#0033c0" stroke-dasharray="5 4" fill="none"/>
        <rect class="crisp" x="909.500" y="250.500" width="793" height="445" fill="none" stroke="#0033c0"/>
        <g class="grip"><circle cx="909.500" cy="250.500" r="4"/><circle cx="1702" cy="250.500" r="4"/><circle cx="909.500" cy="695.500" r="4"/><circle cx="1702" cy="695.500" r="4"/></g>
      </svg>
      <div class="navbar"><i class="nav-wheel"></i><i class="nav-rule"></i></div>
    </div>
  </main>
</div>
</body>
</html>
```

FILE: styles.css
```css
* { box-sizing: border-box; }
html, body { margin: 0; padding: 0; }
body {
  width: 1877px; height: 882px; overflow: hidden;
  background: #cbcbcb; color: #333;
  font: 12px/1.2 "Open Sans", "Noto Sans", sans-serif;
  display: flex; flex-direction: column;
}
.defs { position: absolute; }
svg { display: block; flex: none; }
i { font-style: normal; }

.k { stroke: #333; fill: none; }
.g { stroke: #bbb; fill: none; }
.car { fill: #555; }
.car-g { fill: #aaa; }
.bl { fill: none; stroke: #1f6fc0; stroke-width: 1.600; }
.blue-s { stroke: #1f6fc0; stroke-width: 1.300; }
.crisp { shape-rendering: crispEdges; }
.logo-r { font: 700 13px "Liberation Sans", sans-serif; fill: #fff; }
.mini-pdf { font: 700 6px "Liberation Sans", sans-serif; fill: #fff; }
.mini { font: 7px "Liberation Sans", sans-serif; fill: #333; }
.big-a { font: 700 19px "Liberation Sans", sans-serif; fill: #444; }
.who { font: 12px "Open Sans", sans-serif; letter-spacing: -.35px; fill: #3c3c3c; }
.help { font: 700 14px "Liberation Sans", sans-serif; fill: #2a5fc0; }
.pdf-t { font: 10px "Liberation Sans", sans-serif; fill: #aaa; }

/* Title bar */
.titlebar { height: 29px; display: grid; grid-template-columns: 934px auto 1fr; align-items: start; }
.doc-title { padding-top: 2px; line-height: 17px; color: #4a4a4a; letter-spacing: -.25px; }
.infocenter { justify-self: end; }

/* Tabs */
.tabs { height: 20px; display: flex; align-items: stretch; color: #444; letter-spacing: -.33px; }
.tab { padding: 0 10px; line-height: 20px; white-space: nowrap; }
.tab.file { width: 45px; padding: 0; text-align: center; background: #2a7ab0; color: #fff; }
.tab.first { margin-left: 2px; }
.tab.context { margin-left: 1px; width: 138px; text-align: center; background: #e6efd8; color: #333; padding: 0; letter-spacing: -.55px; }
.tab-toggle { margin-left: 22px; }

/* Ribbon */
.ribbon { height: 96px; padding-top: 1px; display: flex; gap: 1px; background: #e6efd8; border-bottom: 2px solid #d0d0cc; }
.panel { display: flex; flex-direction: column; background: #eeeeee; box-shadow: 1px 0 0 #f6f6f6; }
.panel.context { background: transparent; box-shadow: none; }
.body { height: 75px; background: #eeeeee; flex: none; }
.label { height: 18px; text-align: center; line-height: 18px; color: #555; letter-spacing: -.25px; white-space: nowrap; }
.panel.context .label { background: #e2ecd2; }
.col { display: flex; flex-direction: column; align-items: center; }
.row { display: flex; }
.w-select { width: 56px; } .w-props { width: 63px; } .w-clip { width: 79px; }
.w-geom { width: 139px; } .w-ctrl { width: 54px; } .w-mod { width: 237px; }
.w-view { width: 63px; } .w-meas { width: 56px; } .w-create { width: 81px; margin-right: 3px; }
.w-util { width: 49px; } .w-image { width: 92px; margin-left: 1px; } .w-arr { width: 130px; margin-left: 1px; }
.caret { display: inline-block; width: 0; height: 0; border: 3.5px solid transparent; border-top: 4px solid #555; border-bottom: 0; vertical-align: middle; margin-left: 3px; }
.caret.g { border-top-color: #999; }
.dim { color: #aaa; }

.tool-on { background: #bcd9f1; border: 1px solid #2a7ab8; }
button { font: inherit; color: #555; padding: 0; margin: 0; }
.modify-btn { width: 44px; height: 72px; margin: 2px 0 0 7px; display: flex; flex-direction: column; align-items: center; letter-spacing: -.25px; }
.modify-btn svg { margin-top: 8px; }
.modify-btn span { margin-top: 9px; }
.props-top { margin-top: 4px; }
.props-on { width: 38px; height: 35px; margin-top: 3px; display: flex; align-items: center; justify-content: center; }
.big { display: flex; flex-direction: column; align-items: center; }
.paste { width: 54px; padding-top: 5px; }
.paste span { margin-top: 6px; letter-spacing: -.25px; }
.paste .caret { margin: 5px 0 0; }
.stack { display: flex; flex-direction: column; gap: 7px; padding: 5px 0 0 3px; }
.geom { display: grid; grid-template-columns: 17px 55px 16px 8px 24px; grid-template-rows: repeat(3, 24px); padding: 2px 0 0 7px; align-items: center; color: #555; letter-spacing: -.25px; }
.geom > :nth-child(4n + 3) { grid-column: 3; }
.geom > :nth-child(4n) { grid-column: 5; }
.gtext { padding-left: 4px; white-space: nowrap; }
.gtext .caret { margin-left: 6px; }
.ctrl-ico { margin-top: 7px; }
.ctrl-text { margin-top: 7px; color: #555; letter-spacing: -.25px; }
.cmd { text-align: center; line-height: 15px; color: #555; letter-spacing: -.25px; white-space: nowrap; }
.cmd.dim { color: #b0b0b0; }
.box-ico { margin-top: 5px; }
.box-ico + .cmd { margin-top: 2px; }
.image-row { padding-left: 4px; gap: 5px; }
.image-row .big { width: 42px; padding-top: 5px; }
.image-row .cmd { margin-top: 5px; }
.image-row .pdf-ico { margin: 4px 0 -1px; }
.arrange-row { padding-left: 13px; }
.arrange-row .big { width: 48px; padding-top: 6px; }
.arrange-row .cmd { margin-top: 4px; }
.caret.side { margin: 55px 11px 0 3px; align-self: flex-start; }

/* Options bar */
.options { height: 26px; display: flex; align-items: center; background: #e6efd8; color: #444; letter-spacing: -.25px; }
.opt-title { margin-left: 8px; width: 146px; letter-spacing: -.55px; }
.opt-sep { width: 1px; height: 22px; background: #999; }
.opt-select { margin-left: 10px; width: 96px; height: 22px; padding: 0 5px; display: flex; align-items: center; justify-content: space-between; background: #fff; border: 2px solid #d4d4d4; }

/* Work area */
.work { height: 711px; margin-top: 0; display: flex; border-top: 1px solid #cfcfcf; }
.side-pane { width: 557px; background: #eeeeee; border-right: 4px solid #cbcbcb; display: flex; flex-direction: column; overflow: hidden; }
.pane-title { height: 20px; padding: 2px 0 0 3px; line-height: 20px; color: #5a5a5a; display: flex; justify-content: space-between; letter-spacing: -.25px; }
.x { color: #333; font: 700 13px/20px "DejaVu Sans", sans-serif; padding-right: 1px; }
.type-box { height: 72px; margin: 0 0 3px 1px; width: 552px; display: flex; align-items: center; border: 1px solid #c8c8c8; background: #eeeeee; }
.thumb { width: 66px; height: 66px; margin: 0 4px 0 2px; border: 1px solid #cfcfcf; background: #efefef; }
.type-text { flex: 1; line-height: 17px; color: #4a4a4a; letter-spacing: -.25px; }
.caret.dark { border-top-color: #444; border-width: 4px; margin-right: 3px; }
.type-row { height: 22px; padding-left: 2px; display: flex; align-items: center; letter-spacing: -.25px; }
.type-select { width: 470px; height: 22px; padding: 0 6px 0 2px; display: flex; align-items: center; justify-content: space-between; background: #fff; border-bottom: 1px solid #bbb; margin-right: 5px; }
.edit-type { margin-left: 5px; color: #333; letter-spacing: -.5px; }
.group-head { height: 18px; margin: 1px 3px 0 1px; padding-left: 2px; display: flex; justify-content: space-between; align-items: center; background: #dcdcdc; color: #222; letter-spacing: -.25px; }
.prow + .group-head { margin-top: 0; }
.chev { transform: rotate(90deg); font: 700 9px/1 "DejaVu Sans", sans-serif; margin-right: 3px; }
.prow { height: 18px; margin: 0 3px 0 1px; display: grid; grid-template-columns: 272px 268px 1fr; background: #fff; border-bottom: 1px dotted #777; color: #222; line-height: 16px; letter-spacing: -.25px; }
.prow > :first-child { padding-left: 8px; border-right: 1px dotted #777; }
.prow > .val { padding-left: 3px; border-right: 1px dotted #777; letter-spacing: -.45px; }
.val.editing { border: 1px solid #222; height: 17px; line-height: 15px; padding-left: 2px; }
.check { display: block; width: 13px; height: 13px; margin: 3px 0 0 1px; border-radius: 2px; background: #0d6cc7; }
.prop-blank { flex: none; height: 128px; margin-right: 3px; background: #fff; }
.prop-foot { flex: none; height: 30px; display: flex; align-items: center; justify-content: space-between; padding: 0 3px; border-bottom: 2px solid #cbcbcb; }
.help-link { color: #0b6fd0; text-decoration: underline; letter-spacing: -.25px; }
.apply { width: 71px; height: 19px; text-align: center; line-height: 19px; background: #f4f4f4; border-radius: 2px; color: #999; }
.browser-title { flex: none; }
.tree { flex: 1; margin: 0 3px 0 1px; background: #fff; color: #333; position: relative; letter-spacing: -.25px; }
.tree::before, .groups::before, .leaves::before { content: ""; position: absolute; border-left: 1px dotted #888; }
.tree::before { left: 8px; top: 14px; bottom: 9px; }
.groups, .leaves { position: relative; }
.groups::before { left: 28px; top: 0; bottom: 26px; }
.leaves::before { left: 48px; top: 0; bottom: 9px; }
.node { height: 18px; display: flex; align-items: center; white-space: nowrap; position: relative; }
.dots { display: block; height: 0; border-top: 1px dotted #888; }
.root { padding-left: 4px; }
.d1 { width: 9px; } .d2 { width: 12px; margin-right: 1px; } .d3 { width: 11px; margin-right: 1px; } .d4 { width: 11px; }
.sel { margin-left: 3px; height: 18px; line-height: 18px; padding: 0 3px; background: #dcdcdc; color: #333; }
.group { padding-left: 24px; }
.leaf { padding-left: 48px; }
.leaf b, .leaf span { margin-left: 6px; }
.leaf b { font-weight: 700; color: #222; }
.top { padding-left: 9px; }
.top span { margin-left: 6px; }

/* View */
.view-area { flex: 1; display: flex; flex-direction: column; min-width: 0; }
.view-tabs { height: 21px; flex: none; background: #cbcbcb; display: flex; }
.view-tab { width: 128px; background: #fff; display: flex; align-items: center; padding: 4px 2px 0 4px; color: #444; }
.view-tab b { margin-left: 9px; flex: 1; letter-spacing: -.25px; }
.canvas { flex: 1; background: #fff; position: relative; overflow: hidden; }
.drawing text { font-family: "Liberation Sans", sans-serif; }
.pl { font-size: 5px; fill: #555; text-anchor: middle; }
.pl.s { font-size: 6px; }
.pl.m { font-size: 6.800px; }
.pl.b { font-size: 7.200px; fill: #333; }
.pl.t { font-size: 5px; fill: #222; }
.pl.v { font-size: 5px; }
.pl.l { font-size: 7px; text-anchor: start; }
.tagt text { font-size: 6px; text-anchor: middle; fill: #333; }
.dimt text { font-size: 5.500px; text-anchor: middle; fill: #222; }
.bub circle { fill: #fff; stroke: #222; stroke-width: 1; }
.bubt text { font-size: 11px; text-anchor: middle; fill: #333; }
.mark circle { fill: #fff; stroke: #222; }
.furn rect, .furn circle { fill: #fff; stroke: #222; }
.tags path { fill: #fff; stroke: #333; stroke-width: .8; }
.q circle { fill: #4d86d8; }
.qt text { font-size: 9px; font-weight: 700; text-anchor: middle; fill: #cfe0f6; }
.elev circle, .elev path { fill: #fff; stroke: #111; stroke-dasharray: 2 .6; }
.elev path[stroke="none"] { fill: #111; stroke: none; }
.grip circle { fill: #6498e4; stroke: #6f7f98; stroke-width: 1; }
.navbar { position: absolute; left: 1310px; top: 2px; width: 20px; height: 118px; border: 2px solid #bdbdbd; border-radius: 4px; background: #f3f3f3; overflow: hidden; }
.nav-wheel { position: absolute; left: 3px; top: 21px; width: 20px; height: 20px; border: 1px solid #999; border-radius: 50%; }
.nav-rule { position: absolute; left: 3px; top: 57px; width: 14px; border-top: 1px solid #aaa; }
```
